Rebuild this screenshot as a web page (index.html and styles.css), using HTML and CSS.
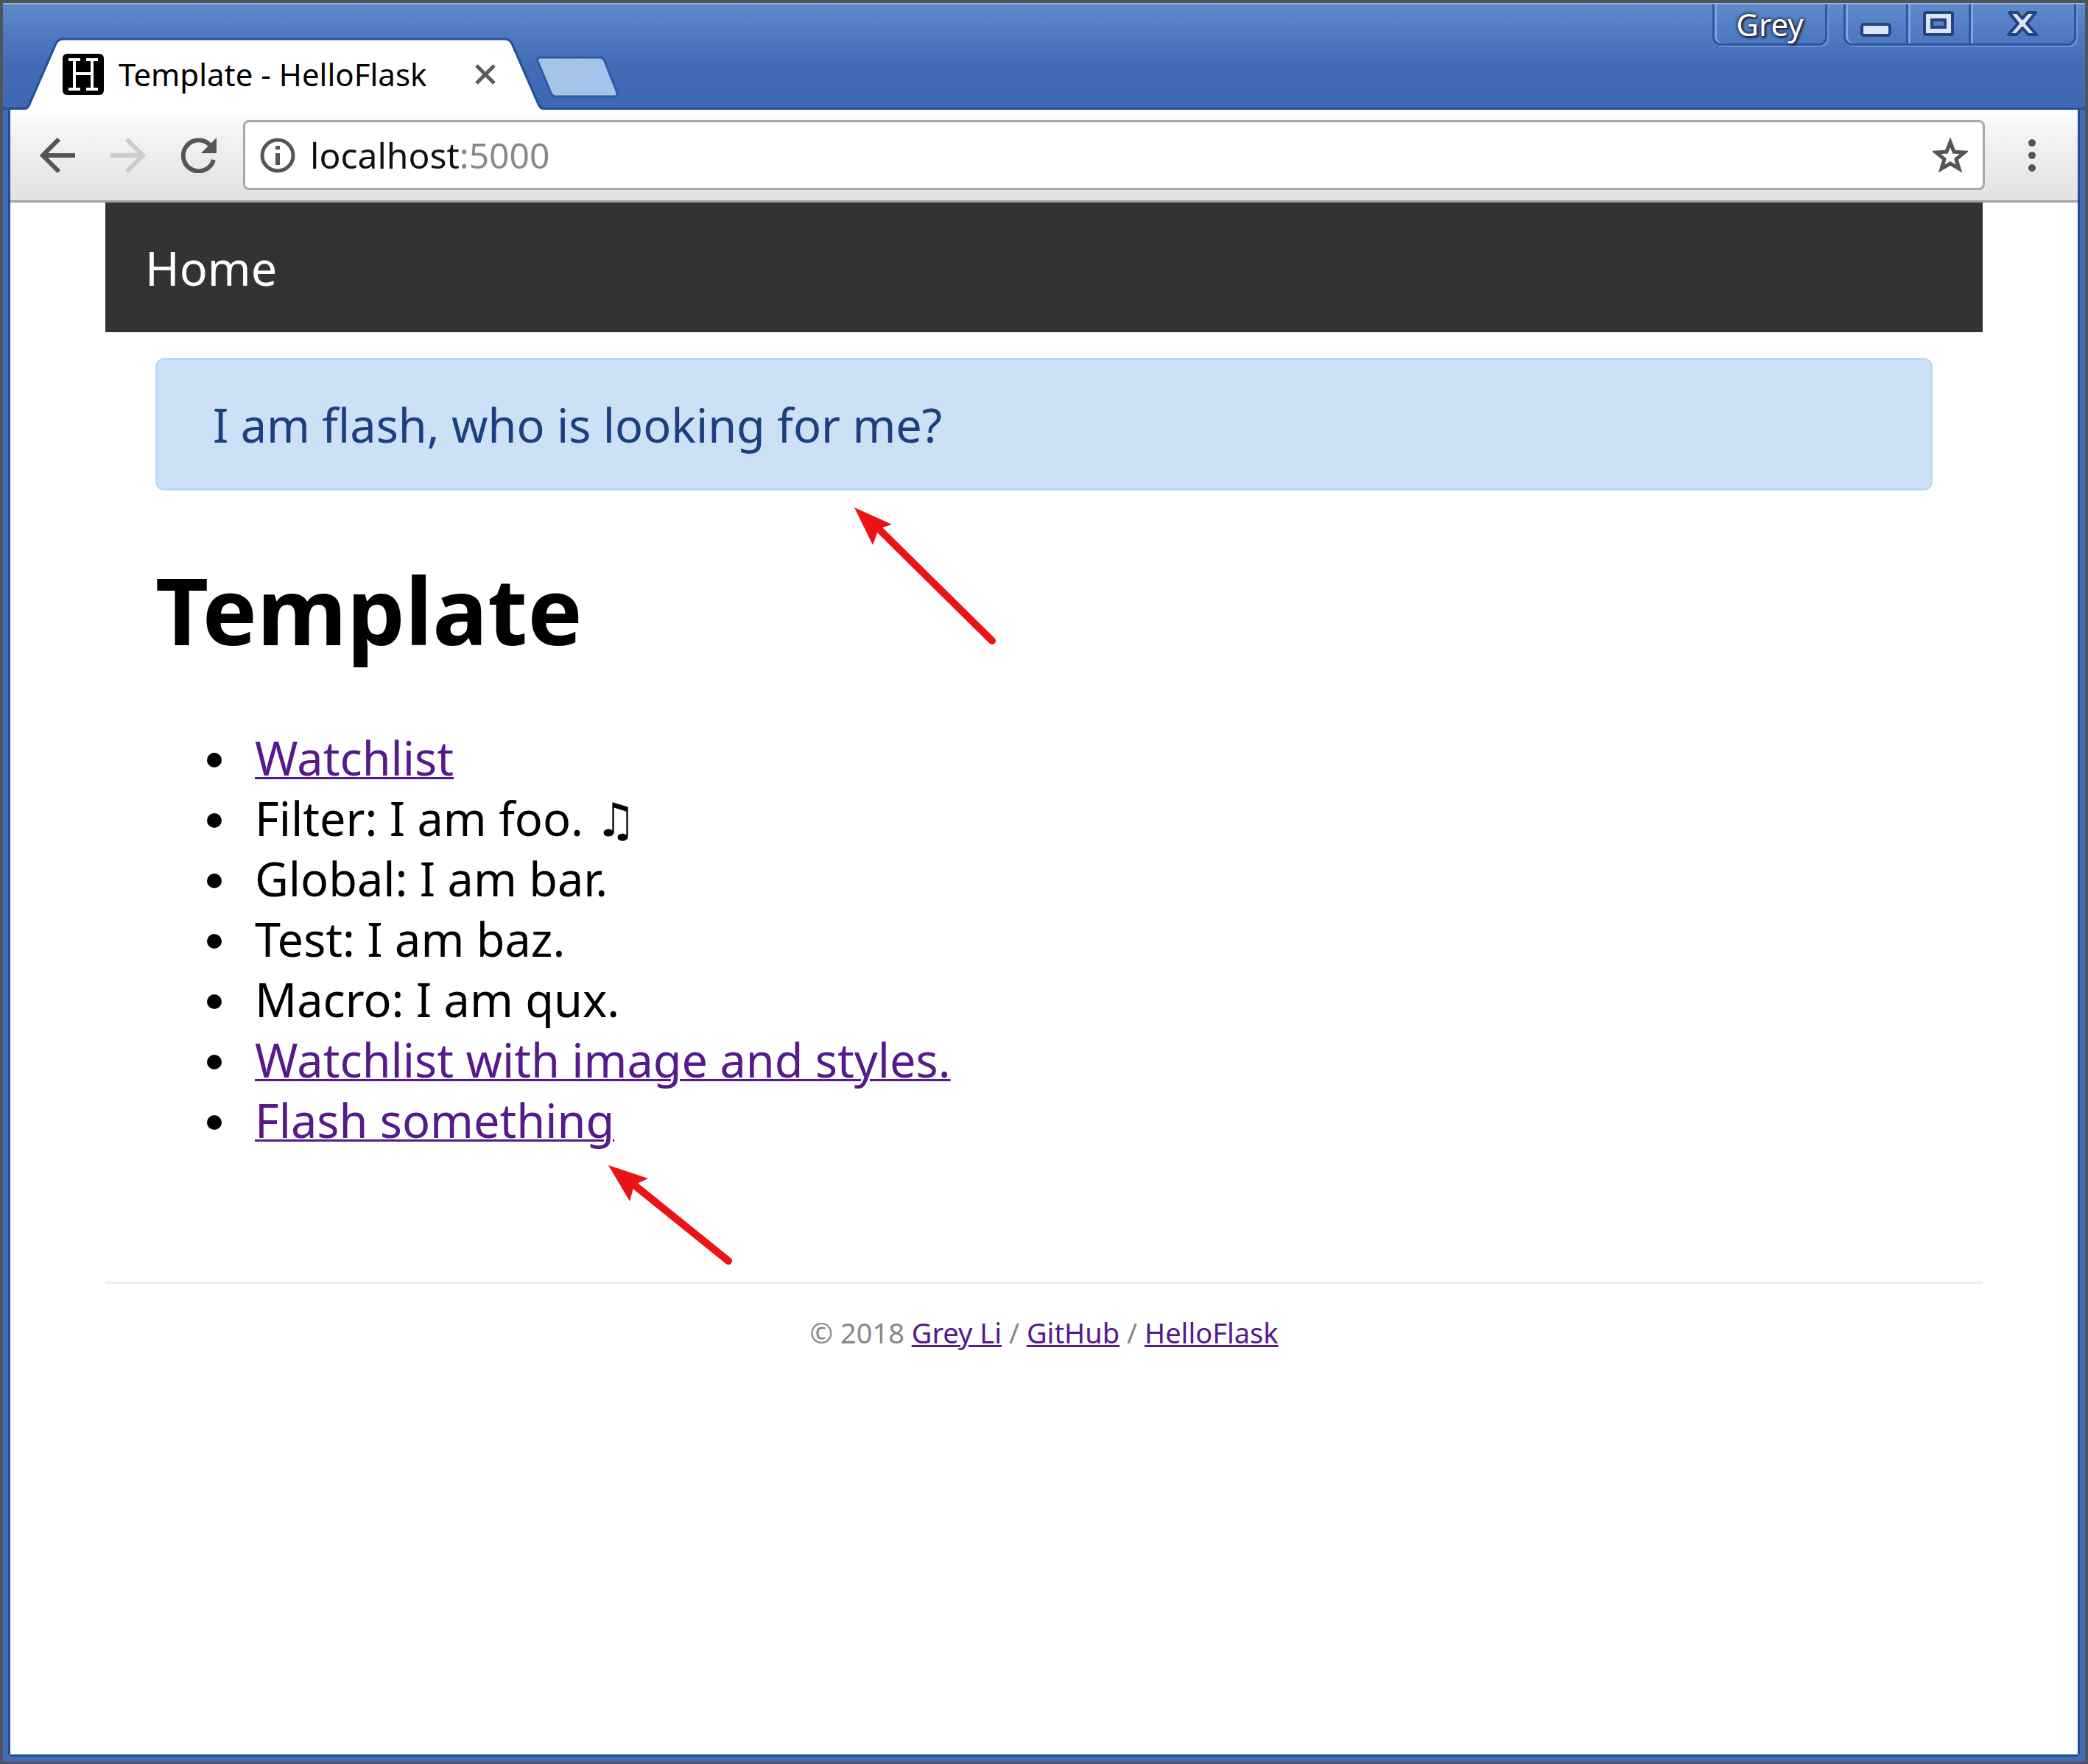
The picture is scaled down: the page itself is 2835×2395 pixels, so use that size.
FILE: index.html
```html
<!DOCTYPE html>
<html lang="en">
<head>
<meta charset="utf-8">
<title>Template - HelloFlask</title>
<link rel="stylesheet" href="styles.css">
</head>
<body>
<div class="window">
  <header class="titlebar">
    <div class="tabs">
      <div class="tab">
        <svg class="tab-shape" viewBox="0 0 722 96" preserveAspectRatio="none" aria-hidden="true">
          <path d="M20 96 Q24 96 27 90 L63 7 Q66 1 72 1 H671 Q677 1 680 7 L716 90 Q719 96 724 96 Z" fill="#fff"/>
          <path d="M0 94 H20 Q24 94 26 88 L62 6 Q65 0 72 0 H671 Q678 0 681 6 L717 88 Q720 94 724 94" fill="none" stroke="#24519c" stroke-width="3"/>
        </svg>
        <svg class="favicon" viewBox="0 0 56 56" aria-hidden="true">
          <rect width="56" height="56" rx="6" fill="#000"/>
          <path d="M8 8h16M8 48h16M32 8h16M32 48h16M16 8v40M40 8v40M16 27h24" fill="none" stroke="#fff" stroke-width="4"/>
        </svg>
        <span class="tab-title">Template - HelloFlask</span>
        <button class="icon-button tab-close" type="button" aria-label="Close tab">
          <svg viewBox="0 0 28 28" width="28" height="28"><path d="M2 2 26 26M26 2 2 26" fill="none" stroke="#5a5a5a" stroke-width="5"/></svg>
        </button>
      </div>
      <button class="icon-button new-tab" type="button" aria-label="New tab">
        <svg viewBox="0 0 116 60" width="116" height="60"><path d="M8 3 H88 Q93 3 95 8 L112 51 Q113 56 108 56 H29 Q24 56 22 51 L4 8 Q3 3 8 3Z" fill="#a6c4ea" stroke="#2f5aa6" stroke-width="3"/></svg>
      </button>
    </div>
    <div class="controls">
      <button class="frame-button profile" type="button">Grey</button>
      <div class="control-group">
        <button class="frame-button" type="button" aria-label="Minimize">
          <svg viewBox="0 0 44 40" width="44" height="40"><rect x="3" y="20" width="38" height="15" rx="3" fill="#d9e5f8" stroke="#27427c" stroke-width="4"/></svg>
        </button>
        <button class="frame-button" type="button" aria-label="Maximize">
          <svg viewBox="0 0 44 40" width="44" height="40"><path fill-rule="evenodd" d="M5 4H39Q41 4 41 6V32Q41 34 39 34H5Q3 34 3 32V6Q3 4 5 4ZM13 14V24H31V14Z" fill="#d9e5f8" stroke="#27427c" stroke-width="4"/></svg>
        </button>
        <button class="frame-button close" type="button" aria-label="Close">
          <svg viewBox="0 0 44 40" width="44" height="40"><path d="M4 4H15L22 12 29 4H40L28 19 41 34H30L22 25 14 34H3L16 19Z" fill="#d9e5f8" stroke="#27427c" stroke-width="4" stroke-linejoin="round"/></svg>
        </button>
      </div>
    </div>
  </header>

  <nav class="toolbar" aria-label="Browser">
    <button class="icon-button" type="button" aria-label="Back">
      <svg viewBox="0 0 48 48" width="48" height="48"><path d="M48 24H4M26 2 4 24 26 46" fill="none" stroke="#555" stroke-width="6"/></svg>
    </button>
    <button class="icon-button" type="button" aria-label="Forward">
      <svg viewBox="0 0 48 48" width="48" height="48"><path d="M0 24H44M22 2 44 24 22 46" fill="none" stroke="#ccc" stroke-width="6"/></svg>
    </button>
    <button class="icon-button" type="button" aria-label="Reload">
      <svg viewBox="0 0 48 48" width="48" height="48"><path d="M40 11A21 21 0 1 0 44 30" fill="none" stroke="#555" stroke-width="6"/><path d="M48 0V21H27Z" fill="#555"/></svg>
    </button>
    <div class="address">
      <svg viewBox="0 0 48 48" width="48" height="48" aria-hidden="true"><circle cx="24" cy="24" r="21" fill="none" stroke="#555" stroke-width="5"/><path d="M24 21V37M24 11V16" fill="none" stroke="#555" stroke-width="6"/></svg>
      <input class="url" type="text" value="localhost:5000" aria-label="Address">
      <button class="icon-button" type="button" aria-label="Bookmark this page">
        <svg viewBox="0 0 48 48" width="48" height="48"><path d="M24 6 29 19 43 20 32 29 36 42 24 35 12 42 16 29 5 20 19 19Z" fill="none" stroke="#555" stroke-width="5"/></svg>
      </button>
    </div>
    <button class="icon-button menu" type="button" aria-label="Menu">
      <svg viewBox="0 0 12 48" width="12" height="48" fill="#555"><circle cx="6" cy="7" r="5"/><circle cx="6" cy="24" r="5"/><circle cx="6" cy="41" r="5"/></svg>
    </button>
  </nav>

  <div class="page">
    <nav class="navbar"><a href="#">Home</a></nav>
    <main class="content">
      <div class="alert" role="status">I am flash, who is looking for me?</div>
      <h1>Template</h1>
      <ul>
        <li><a href="#">Watchlist</a></li>
        <li>Filter: I am foo. <span class="note">♫</span></li>
        <li>Global: I am bar.</li>
        <li>Test: I am baz.</li>
        <li>Macro: I am qux.</li>
        <li><a href="#">Watchlist with image and styles.</a></li>
        <li><a href="#">Flash something</a></li>
      </ul>
      <svg class="arrow arrow-alert" viewBox="0 0 196 190" width="196" height="190" aria-hidden="true">
        <path d="M34 30 187 181" stroke="#eb1414" stroke-width="10" stroke-linecap="round"/><path d="M0 0 51 23 33 29 25 51Z" fill="#eb1414"/>
      </svg>
      <svg class="arrow arrow-flash" viewBox="0 0 170 136" width="170" height="136" aria-hidden="true">
        <path d="M34 26 163 130" stroke="#eb1414" stroke-width="10" stroke-linecap="round"/><path d="M0 0 54 18 35 27 29 49Z" fill="#eb1414"/>
      </svg>
    </main>
    <footer class="footer">© 2018 <a href="#">Grey Li</a> / <a href="#">GitHub</a> / <a href="#">HelloFlask</a></footer>
  </div>
</div>
</body>
</html>
```

FILE: styles.css
```css
* {
  box-sizing: border-box;
}

body {
  margin: 0;
  background: #4a4a4c;
  color: #000;
  font: 63px/82px "Noto Sans", "Noto Sans CJK SC", sans-serif;
}

svg {
  display: block;
}

button {
  padding: 0;
  border: 0;
  background: none;
  font: inherit;
}

.icon-button {
  flex: none;
}

.window {
  display: flex;
  flex-direction: column;
  min-height: 100vh;
  padding: 0 10px 10px;
  border: 4px solid #505358;
  border-width: 4px 4px 3px;
  background: #3f6cb4;
}

.titlebar {
  display: flex;
  justify-content: space-between;
  height: 145px;
  margin: 0 -10px;
  padding: 0 12px 0 10px;
  border-top: 2px solid #8fb0e2;
  background: linear-gradient(#5f8bca, #527dc4 34px, #426db6 80px, #3e68b1);
  box-shadow: inset 0 -3px #24519c;
}

.tabs {
  display: flex;
  align-items: flex-end;
}

.tab {
  position: relative;
  display: flex;
  align-items: center;
  width: 722px;
  height: 96px;
  padding: 0 63px 0 71px;
}

.tab-shape {
  position: absolute;
  inset: 0;
  width: 100%;
  height: 100%;
  overflow: visible;
}

.favicon {
  position: relative;
  flex: none;
  width: 56px;
  height: 56px;
}

.tab-title {
  position: relative;
  margin-left: 20px;
  font-size: 42px;
  white-space: nowrap;
}

.tab-close {
  position: relative;
  margin-left: auto;
}

.new-tab {
  margin: 0 0 14px -10px;
}

.controls {
  display: flex;
  align-items: flex-start;
  gap: 22px;
}

.frame-button {
  display: flex;
  justify-content: center;
  align-items: center;
  width: 85px;
  height: 56px;
  border: 3px solid #2f56a0;
  border-width: 0 0 3px 3px;
  box-shadow: inset 3px 0 #82a5de;
  color: #fff;
}

.profile {
  width: 156px;
  border-right-width: 3px;
  border-radius: 0 0 12px 12px;
  box-shadow: inset 3px 0 #82a5de, 2px 2px #6b92d2;
  font-size: 42px;
  text-shadow: 0 0 4px #223, 0 0 4px #223, 2px 2px 3px #223;
}

.control-group {
  display: flex;
  border-radius: 0 0 12px 12px;
  box-shadow: 2px 2px #6b92d2;
}

.control-group .frame-button:first-child {
  border-bottom-left-radius: 12px;
}

.control-group .close {
  width: 146px;
  border-right-width: 3px;
  border-bottom-right-radius: 12px;
}

.toolbar {
  display: flex;
  align-items: center;
  gap: 48px;
  height: 126px;
  padding: 0 56px 0 40px;
  border-bottom: 3px solid #a0a0a0;
  background: linear-gradient(#fff, #f4f4f4 30px, #e1e1e1);
  box-shadow: -3px 0 #234a94, 3px 0 #234a94;
}

.address {
  display: flex;
  flex: 1;
  align-items: center;
  height: 95px;
  margin-left: -12px;
  padding: 0 20px;
  border: 3px solid #a8a8a8;
  border-radius: 8px;
  background: #fff;
}

.url {
  flex: 1;
  min-width: 0;
  margin: 0 20px;
  padding: 0;
  border: 0;
  outline: 0;
  background: linear-gradient(90deg, #111 203px, #888 203px);
  background-clip: text;
  color: transparent;
  font: 48px/64px "Noto Sans", sans-serif;
}

.menu {
  margin-left: 10px;
}

.page {
  flex: 1;
  padding: 0 129px;
  background: #fff;
  box-shadow: -3px 0 #234a94, 3px 0 #234a94, 0 3px #234a94;
}

.navbar {
  padding: 48px 54px 46px;
  background: #333;
}

.navbar a {
  display: block;
  width: max-content;
  color: #fff;
  text-decoration: none;
}

.content {
  position: relative;
  padding: 35px 68px 0;
}

.alert {
  padding: 47px 75px 45px;
  border: 3px solid #b8daf5;
  border-radius: 12px;
  background: #cce0f6;
  color: #1c3f7e;
}

h1 {
  margin: 82px 0 80px;
  font-size: 125px;
  line-height: 160px;
}

ul {
  margin: 0;
  padding-left: 135px;
  list-style: none;
}

li::before {
  content: "";
  display: inline-block;
  width: 20px;
  height: 20px;
  margin: 0 45px 0 -65px;
  border-radius: 50%;
  background: #000;
  vertical-align: 11px;
}

a {
  color: #551a8b;
  text-decoration-thickness: 3px;
}

.note {
  font-family: "DejaVu Sans", sans-serif;
  line-height: 1;
}

.arrow {
  position: absolute;
  fill: none;
}

.arrow-alert {
  top: 238px;
  left: 1017px;
}

.arrow-flash {
  top: 1131px;
  left: 683px;
}

.footer {
  margin-top: 178px;
  padding-top: 34px;
  border-top: 3px solid #ebebeb;
  color: #888;
  font-size: 38px;
  line-height: 64px;
  text-align: center;
}
```
